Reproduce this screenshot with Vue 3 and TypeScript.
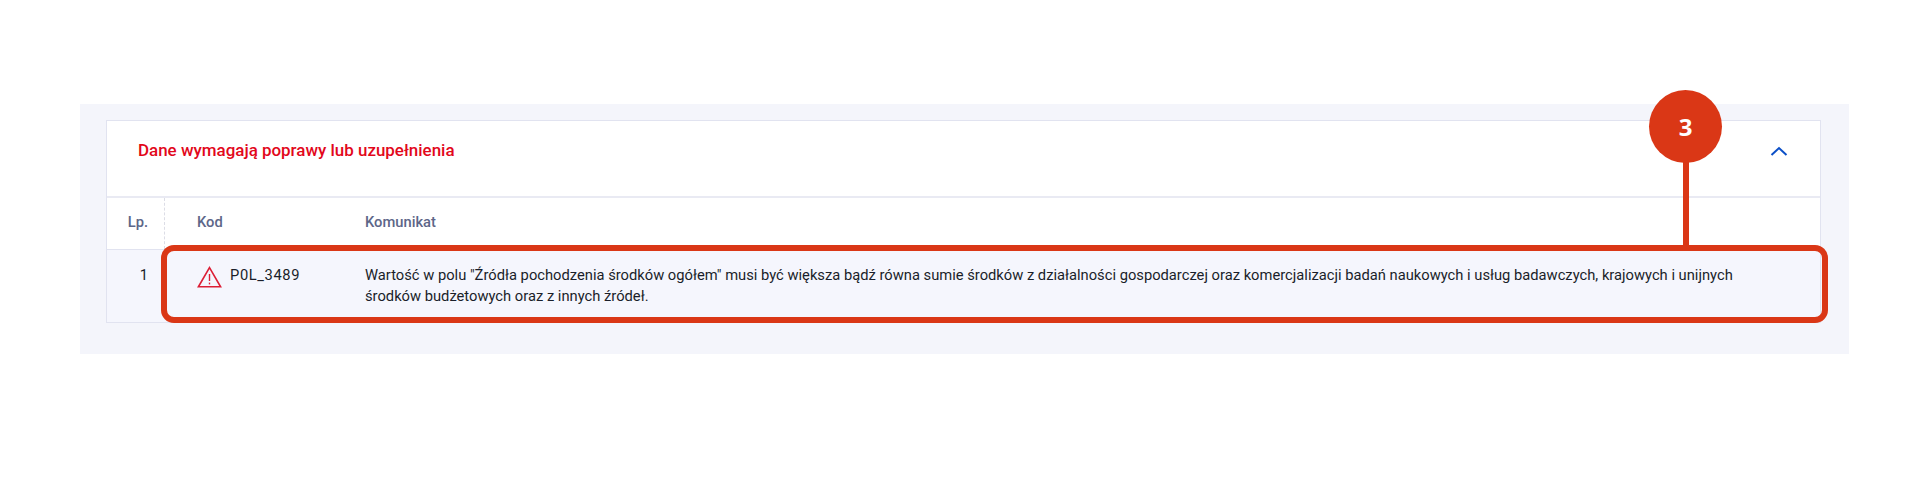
<script setup lang="ts">
const message =
  'Wartość w polu "Źródła pochodzenia środków ogółem" musi być większa bądź równa sumie środków z działalności gospodarczej oraz komercjalizacji badań naukowych i usług badawczych, krajowych i unijnych środków budżetowych oraz z innych źródeł.'
</script>

<template>
  <div class="page">
    <section class="panel">
      <div class="card">
        <header class="card-head">
          <h2 class="title">Dane wymagają poprawy lub uzupełnienia</h2>
          <svg class="chevron" width="18" height="12" viewBox="0 0 18 12" fill="none">
            <path d="M1.5 10 L9 3 L16.5 10" stroke="#0b4fc7" stroke-width="2" />
          </svg>
        </header>
        <div class="row row-head">
          <div class="cell-lp">Lp.</div>
          <div class="cell-code">Kod</div>
          <div class="cell-msg">Komunikat</div>
        </div>
        <div class="row row-body">
          <div class="cell-lp">1</div>
          <div class="cell-code">
            <svg class="warn" width="25" height="22" viewBox="0 0 25 22" fill="none">
              <path d="M12.5 1.6 L23.6 20.8 H1.4 Z" stroke="#dc1f36" stroke-width="1.6" stroke-linejoin="miter" />
              <path d="M12.5 8 V15" stroke="#dc1f36" stroke-width="1.4" />
              <path d="M12.5 16.6 V18.4" stroke="#dc1f36" stroke-width="1.4" />
            </svg>
            <span class="code">P0L_3489</span>
          </div>
          <div class="cell-msg">{{ message }}</div>
        </div>
      </div>
      <div class="callout-box"></div>
      <div class="callout-line"></div>
      <div class="callout-badge">3</div>
    </section>
  </div>
</template>

<style>
html, body { margin: 0; background: #fff; }
</style>

<style scoped>
.page {
  height: 485px;
  padding: 104px 69px 0 80px;
  box-sizing: border-box;
  font-family: Roboto, "Liberation Sans", sans-serif;
}
.panel {
  position: relative;
  height: 250px;
  padding: 16px 28px 0 26px;
  box-sizing: border-box;
  background: #f4f5fb;
}
.card {
  border: 1px solid #e1e3f0;
  background: #fff;
}
.card-head {
  height: 77px;
  box-sizing: border-box;
  padding: 0 32px 0 31px;
  display: flex;
  align-items: flex-start;
  justify-content: space-between;
  border-bottom: 2px solid #e9eaf3;
}
.title {
  margin: 17px 0 0;
  font-size: 16.95px;
  line-height: 24px;
  font-weight: 500;
  color: #e2071b;
}
.chevron { margin-top: 24px; }
.row {
  display: grid;
  grid-template-columns: 58px 200px 1fr;
  font-size: 14.72px;
  line-height: 21px;
}
.row-head {
  height: 52px;
  box-sizing: border-box;
  border-bottom: 1px solid #e1e3f0;
  color: #5d6688;
  font-weight: 500;
}
.row-head > div { padding-top: 14px; }
.row-body {
  height: 72px;
  background: #f5f6fd;
  color: #1a1e2a;
}
.row-body > div { padding-top: 15px; }
.cell-lp {
  text-align: right;
  padding-right: 16px;
  border-right: 1px dashed #dcdde6;
  box-sizing: border-box;
}
.row-body .cell-lp { border-right-color: transparent; }
.cell-code {
  padding-left: 32px;
  display: flex;
  align-items: flex-start;
  gap: 8px;
}
.warn { flex: none; margin-top: 1px; }
.code {
  letter-spacing: 0.6px;
}
.cell-msg { padding-right: 60px; }
.callout-box {
  position: absolute;
  left: 81px;
  top: 141px;
  width: 1667px;
  height: 78px;
  box-sizing: border-box;
  border: 6px solid #da3716;
  border-radius: 13px;
}
.callout-line {
  position: absolute;
  left: 1603px;
  top: 55px;
  width: 6px;
  height: 88px;
  background: #da3716;
}
.callout-badge {
  position: absolute;
  left: 1569px;
  top: -14px;
  width: 73px;
  height: 73px;
  border-radius: 50%;
  background: #da3716;
  color: #fff;
  font-family: "Open Sans", sans-serif;
  font-weight: 700;
  font-size: 24px;
  line-height: 73px;
  text-align: center;
}
</style>
